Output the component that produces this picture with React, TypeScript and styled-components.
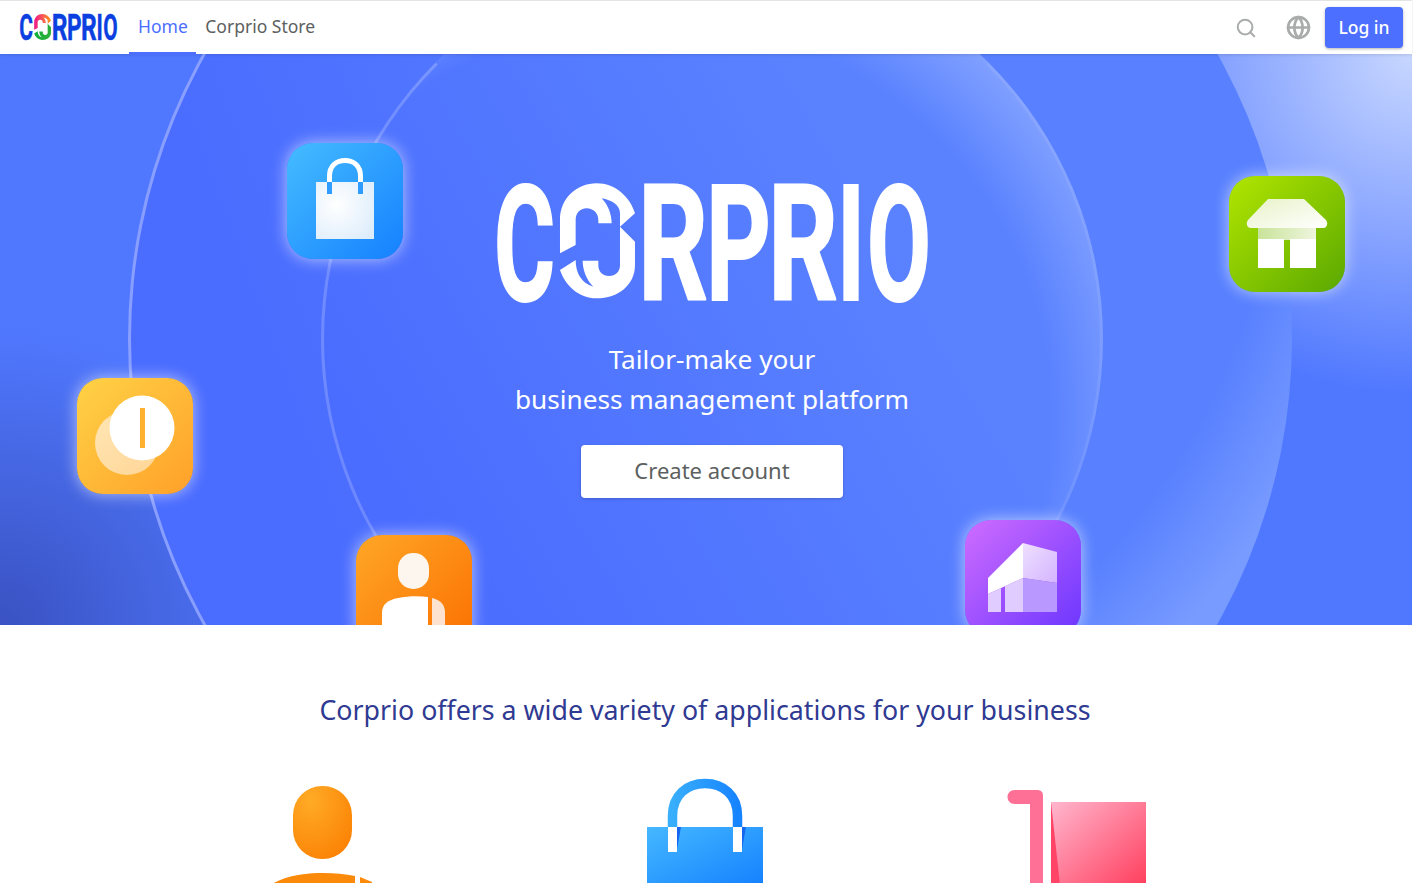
import styled, { createGlobalStyle } from 'styled-components';
import { Search, Globe } from 'lucide-react';

const GlobalStyle = createGlobalStyle`
  html, body {
    margin: 0;
    height: 883px;
    overflow: hidden;
    background: #fff;
    font-family: "Noto Sans", "Open Sans", sans-serif;
  }
  #root { width: 1412px; }
`;

const Nav = styled.header`
  height: 53px;
  border-top: 1px solid #e4e4e4;
  background: #fff;
  display: flex;
  align-items: stretch;
  padding: 0 9px 0 20px;
  position: relative;
  z-index: 3;
  box-shadow: 0 1px 3px rgba(0, 0, 0, 0.12);
`;

const Brand = styled.div`
  display: flex;
  align-items: center;
  margin-right: 12px;
`;

const Tab = styled.a<{ $active?: boolean }>`
  display: flex;
  align-items: center;
  padding: 0 8.5px 2px 9px;
  font-size: 17.5px;
  color: ${p => (p.$active ? '#4c6fff' : '#5c6160')};
  border-bottom: 3px solid ${p => (p.$active ? '#4c6fff' : 'transparent')};
  margin-bottom: -1px;
  cursor: pointer;
`;

const NavRight = styled.div`
  margin-left: auto;
  display: flex;
  align-items: center;
`;

const IconBtn = styled.button<{ $gap: number }>`
  border: 0;
  background: none;
  padding: 0;
  display: flex;
  color: #a9acab;
  margin-right: ${p => p.$gap}px;
`;

const LoginBtn = styled.button`
  width: 78px;
  height: 41px;
  padding: 0 0 2px;
  border: 0;
  border-radius: 4px;
  background: #4c6fff;
  color: #fff;
  font: 500 17.5px "Noto Sans", sans-serif;
  box-shadow: 0 1px 3px rgba(0, 0, 0, 0.3);
`;

const Hero = styled.section`
  height: 571px;
  box-sizing: border-box;
  position: relative;
  overflow: hidden;
  padding: 129px 0 0 12px;
  display: flex;
  flex-direction: column;
  align-items: center;
  background:
    radial-gradient(circle at 100% 0, #c8d7ff 0, rgba(90, 128, 255, 0) 340px),
    radial-gradient(circle at 0 100%, #3a52c2 0, rgba(58, 82, 194, 0) 300px),
    #5078ff;
`;

const Disc = styled.div<{ $size: number; $x: number; $y: number; $fill: string; $line: string }>`
  position: absolute;
  left: ${p => p.$x - p.$size / 2}px;
  top: ${p => p.$y - p.$size / 2}px;
  width: ${p => p.$size}px;
  height: ${p => p.$size}px;
  box-sizing: border-box;
  border-radius: 50%;
  background: ${p => p.$fill};
  border: 3px solid;
  border-color: ${p => p.$line};
  background-origin: border-box;
`;

const Tile = styled.div<{ $x: number; $y: number; $from: string; $to: string }>`
  position: absolute;
  left: ${p => p.$x}px;
  top: ${p => p.$y}px;
  width: 116px;
  height: 116px;
  border-radius: 26px;
  background: linear-gradient(135deg, ${p => p.$from}, ${p => p.$to});
  box-shadow: 0 0 16px rgba(255, 255, 255, 0.6);
  svg { display: block; }
`;

const HeroLogo = styled.div`
  position: relative;
  height: 120px;
  line-height: 0;
`;

const Tagline = styled.p`
  position: relative;
  margin: 36px 0 26px;
  color: #fff;
  font-size: 26.2px;
  line-height: 40px;
  text-align: center;
`;

const CreateBtn = styled.button`
  position: relative;
  width: 262px;
  height: 53px;
  padding: 0 0 3px;
  border: 0;
  border-radius: 4px;
  background: #fff;
  color: #5c6160;
  font: 22px "Noto Sans", sans-serif;
  box-shadow: 0 1px 3px rgba(0, 0, 0, 0.2);
`;

const Offers = styled.section`
  display: flex;
  flex-direction: column;
  align-items: center;
  padding-right: 2px;
`;

const OffersTitle = styled.h2`
  margin: 65px 0 45px;
  font-size: 26.76px;
  line-height: 40px;
  font-weight: 400;
  color: #2f3a92;
`;

const AppRow = styled.div`
  display: flex;
`;

const AppCol = styled.div`
  width: 382px;
  display: flex;
  justify-content: center;
`;

type LogoProps = { scale: number; colored?: boolean };

// wordmark: letters are real text squeezed to width, the linked O is a drawing
const Wordmark = ({ scale, colored }: LogoProps) => {
  const ink = colored ? '#0b3fe0' : '#fff';
  const id = colored ? 'nav' : 'hero';
  const letters: [string, number, number][] = [
    ['C', -3, 61],
    ['R', 141, 70],
    ['P', 209, 65],
    ['R', 271, 70],
    ['I', 340, 28],
    ['O', 370, 64],
  ];
  return (
    <svg width={431 * scale} height={120 * scale} viewBox="0 0 431 120" style={{ overflow: 'visible' }}>
      <defs>
        <linearGradient id={`${id}-top`} x1="0" x2="1" y1="0" y2="0">
          <stop offset="0" stopColor={colored ? '#f0168c' : '#fff'} />
          <stop offset="1" stopColor={colored ? '#ff9a1a' : '#fff'} />
        </linearGradient>
        <linearGradient id={`${id}-bot`} x1="0" x2="1" y1="0" y2="0">
          <stop offset="0" stopColor={colored ? '#12b03c' : '#fff'} />
          <stop offset="1" stopColor={colored ? '#2fae3a' : '#fff'} />
        </linearGradient>
      </defs>
      {letters.map(([ch, x, w]) => (
        <text
          key={x}
          x={x}
          y={116.5}
          fill={ink}
          stroke={ink}
          strokeWidth={2}
          fontFamily="Roboto, sans-serif"
          fontWeight={700}
          fontSize={161}
          textLength={w}
          lengthAdjust="spacingAndGlyphs"
        >
          {ch}
        </text>
      ))}
      <g transform="translate(-17 -13) scale(.3333)">
        <path
          fill={`url(#${id}-top)`}
          d="M240 250V150C240 85 290 40 350 40C405 40 450 80 465 130L420 170V130C420 105 395 90 365 85C385 105 395 135 395 160H355V150C355 130 340 115 320 115C300 115 287 130 287 150V225Z"
        />
        <path
          fill={`url(#${id}-bot)`}
          d="M420 170L465 215V285C465 345 415 385 350 385C295 385 255 345 240 300L287 270C287 310 305 340 340 350C320 330 308 300 308 272H355V285C355 305 368 318 387 318C407 318 420 305 420 285Z"
        />
      </g>
    </svg>
  );
};

const BagTile = () => (
  <svg width="116" height="116" viewBox="0 0 116 116">
    <defs>
      <radialGradient id="bagFill" cx=".35" cy=".4" r=".8">
        <stop offset="0" stopColor="#fff" />
        <stop offset="1" stopColor="#dcecfb" />
      </radialGradient>
    </defs>
    <path d="M42.5 50V33C42.5 23 49 17.5 58 17.5S73.5 23 73.5 33V50" fill="none" stroke="#fff" strokeWidth="5" />
    <rect x="29" y="39" width="58" height="57" fill="url(#bagFill)" />
    <rect x="40" y="39" width="5" height="12" fill="#2f9dff" />
    <rect x="71" y="39" width="5" height="12" fill="#2f9dff" />
  </svg>
);

const ShopTile = () => (
  <svg width="116" height="116" viewBox="0 0 116 116">
    <defs>
      <linearGradient id="roofFill" x1="0" x2="1" y1="0" y2="1">
        <stop offset="0" stopColor="#e8f2c8" />
        <stop offset="1" stopColor="#fff" />
      </linearGradient>
      <linearGradient id="wallFill" x1="0" x2="1" y1="0" y2="0">
        <stop offset="0" stopColor="#c9e39a" />
        <stop offset="1" stopColor="#eef5dd" />
      </linearGradient>
    </defs>
    <rect x="29" y="50" width="58" height="14" fill="url(#wallFill)" />
    <path d="M39 23H75L97 44C99.500 47 98 52 94 52H22C18 52 16.500 47 19 44Z" fill="url(#roofFill)" />
    <rect x="29" y="63" width="26" height="29" fill="#fff" />
    <rect x="61" y="63" width="26" height="29" fill="#fff" />
  </svg>
);

const CoinTile = () => (
  <svg width="116" height="116" viewBox="0 0 116 116">
    <defs>
      <linearGradient id="coinBack" x1="0" x2="1" y1="0" y2="1">
        <stop offset="0" stopColor="#ffe6b4" />
        <stop offset="1" stopColor="#ffd596" />
      </linearGradient>
    </defs>
    <circle cx="50" cy="65" r="32" fill="url(#coinBack)" />
    <circle cx="65" cy="50" r="32.500" fill="#fff" />
    <rect x="63" y="30" width="5" height="40" fill="#ffb02e" />
  </svg>
);

const PersonTile = () => (
  <svg width="116" height="90" viewBox="0 0 116 90">
    <rect x="42" y="18" width="31" height="36" rx="15" fill="#fdf6ef" />
    <path d="M26 90V78C26 69 32 65 42 63C52 61 63 61 72 62V90Z" fill="#fff" />
    <path d="M76 63C84 65 89 69 89 78V90H76Z" fill="#fde3cf" />
  </svg>
);

const StoreTile = () => (
  <svg width="116" height="116" viewBox="0 0 116 116">
    <defs>
      <linearGradient id="storeTop" x1="0" x2="1" y1="0" y2="1">
        <stop offset="0" stopColor="#efe0ff" />
        <stop offset="1" stopColor="#d3b4ff" />
      </linearGradient>
    </defs>
    <path d="M58 23L92 32V63L58 58Z" fill="url(#storeTop)" />
    <path d="M58 58L92 63V92H58Z" fill="#b999ff" />
    <path d="M23 58L58 23V58L23 74Z" fill="#fff" />
    <path d="M23 74L36 68V92H23ZM40 66L58 58V92H40Z" fill="#e0ccff" />
  </svg>
);

const PersonIcon = () => (
  <svg width="200" height="110" viewBox="0 0 200 110">
    <defs>
      <radialGradient id="bigOrange" cx=".3" cy=".2" r="1">
        <stop offset="0" stopColor="#ffab26" />
        <stop offset="1" stopColor="#fb7d00" />
      </radialGradient>
    </defs>
    <rect x="70" y="11" width="59" height="73" rx="29" fill="url(#bigOrange)" />
    <path d="M47 110C62 101 80 98 100 98C112 98 122 99 132 101V110Z" fill="#fb8a0a" />
    <path d="M137 102L149 107V110H137Z" fill="#fb8a0a" />
  </svg>
);

const BagIcon = () => (
  <svg width="200" height="110" viewBox="0 0 200 110">
    <defs>
      <linearGradient id="bigBag" x1="0" x2="1" y1="0" y2="1">
        <stop offset="0" stopColor="#45b8ff" />
        <stop offset="1" stopColor="#1581ff" />
      </linearGradient>
      <linearGradient id="bigHandle" x1="0" x2="1" y1="0" y2="0">
        <stop offset="0" stopColor="#38aefc" />
        <stop offset="1" stopColor="#1784ff" />
      </linearGradient>
    </defs>
    <path d="M67.500 53V41C67.500 20 82 8.500 100 8.500S132.500 20 132.500 41V53" fill="none" stroke="url(#bigHandle)" strokeWidth="9.500" />
    <rect x="42" y="52" width="116" height="58" fill="url(#bigBag)" />
    <rect x="63" y="52" width="9" height="25" fill="#fff" />
    <rect x="128" y="52" width="9" height="25" fill="#fff" />
    <path d="M72 52H76L72 74Z" fill="#1567f0" />
    <path d="M137 52H141L137 74Z" fill="#1567f0" />
  </svg>
);

const CartIcon = () => (
  <svg width="200" height="110" viewBox="0 0 200 110">
    <defs>
      <linearGradient id="bigCart" x1="0" x2="1" y1="0" y2="1">
        <stop offset="0" stopColor="#ffb6ce" />
        <stop offset="1" stopColor="#ff3f5e" />
      </linearGradient>
    </defs>
    <path d="M28 15H50C54 15 56 17 56 21V110H43V29H28C18 29 18 15 28 15Z" fill="#ff7096" />
    <rect x="64" y="27" width="95" height="83" fill="url(#bigCart)" />
    <path d="M64 27L73 110H64Z" fill="#ff4468" />
  </svg>
);

export default function App() {
  return (
    <>
      <GlobalStyle />
      <Nav>
        <Brand>
          <Wordmark scale={0.225} colored />
        </Brand>
        <Tab $active>Home</Tab>
        <Tab>Corprio Store</Tab>
        <NavRight>
          <IconBtn $gap={29}>
            <Search size={22} strokeWidth={2.2} />
          </IconBtn>
          <IconBtn $gap={14}>
            <Globe size={25} strokeWidth={2.6} />
          </IconBtn>
          <LoginBtn>Log in</LoginBtn>
        </NavRight>
      </Nav>
      <Hero>
        <Disc
          $size={1164}
          $x={710}
          $y={285}
          $fill="radial-gradient(circle at 489px 349px, rgba(120, 155, 255, 0) 660px, rgba(120, 155, 255, 1) 770px), linear-gradient(70deg, #4a6cff 20%, #5880ff 60%)"
          $line="transparent transparent transparent rgba(255, 255, 255, 0.35)"
        />
        <Disc
          $size={782}
          $x={712}
          $y={285}
          $fill="radial-gradient(circle at 330px 470px, rgba(128, 160, 255, 0) 400px, rgba(128, 160, 255, 1) 490px), linear-gradient(60deg, #4a6cff 15%, #5a82ff 70%)"
          $line="rgba(255, 255, 255, 0.02) rgba(255, 255, 255, 0.08) rgba(255, 255, 255, 0.04) rgba(255, 255, 255, 0.2)"
        />
        <Tile $x={287} $y={89} $from="#45bcff" $to="#1581ff"><BagTile /></Tile>
        <Tile $x={1229} $y={122} $from="#b2e600" $to="#5aa800"><ShopTile /></Tile>
        <Tile $x={77} $y={324} $from="#ffd245" $to="#ffa02a"><CoinTile /></Tile>
        <Tile $x={356} $y={481} $from="#ffa726" $to="#fb6f00"><PersonTile /></Tile>
        <Tile $x={965} $y={466} $from="#cf6cff" $to="#6a35ff"><StoreTile /></Tile>
        <HeroLogo>
          <Wordmark scale={1} />
        </HeroLogo>
        <Tagline>
          Tailor-make your
          <br />
          business management platform
        </Tagline>
        <CreateBtn>Create account</CreateBtn>
      </Hero>
      <Offers>
        <OffersTitle>Corprio offers a wide variety of applications for your business</OffersTitle>
        <AppRow>
          <AppCol><PersonIcon /></AppCol>
          <AppCol><BagIcon /></AppCol>
          <AppCol><CartIcon /></AppCol>
        </AppRow>
      </Offers>
    </>
  );
}
